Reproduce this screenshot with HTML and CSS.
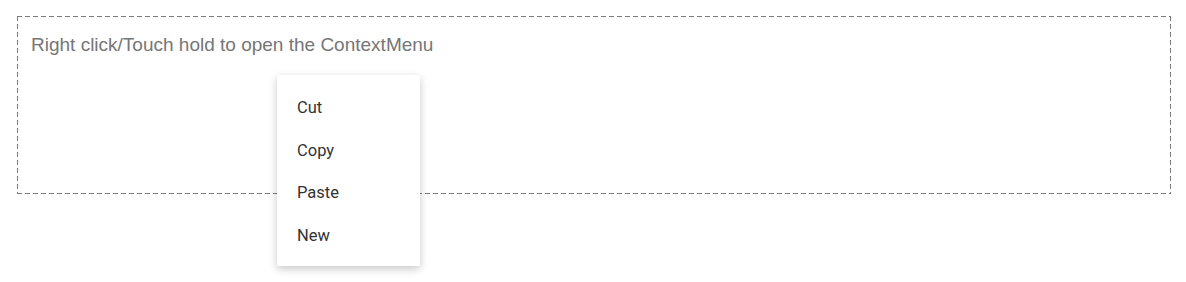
FILE: index.html
```html
<!DOCTYPE html>
<html lang="en">
<head>
    <meta charset="UTF-8">
    <meta name="viewport" content="width=device-width, initial-scale=1.0">
    <title>ContextMenu</title>
    <link rel="stylesheet" href="styles.css">
</head>
<body>
    <div class="target">Right click/Touch hold to open the ContextMenu</div>

    <ul class="context-menu">
        <li class="menu-item">Cut</li>
        <li class="menu-item">Copy</li>
        <li class="menu-item">Paste</li>
        <li class="menu-item">New</li>
    </ul>
</body>
</html>
```

FILE: styles.css
```css
body {
    margin: 0;
    padding: 16px 15px 0 17px;
    background-color: #fff;
}

/* dashed border drawn with gradients to get the longer dashes */
.target {
    height: 161px;
    padding: 17px 14px 0;
    background:
        repeating-linear-gradient(90deg, #7d7d7d 0 5px, transparent 5px 8px) top left / 100% 1px no-repeat,
        repeating-linear-gradient(90deg, #7d7d7d 0 5px, transparent 5px 8px) bottom left / 100% 1px no-repeat,
        repeating-linear-gradient(180deg, #7d7d7d 0 5px, transparent 5px 8px) top left / 1px 100% no-repeat,
        repeating-linear-gradient(180deg, #7d7d7d 0 5px, transparent 5px 8px) top right / 1px 100% no-repeat;
    font-family: "Liberation Sans", Arial, sans-serif;
    font-size: 19px;
    line-height: 24px;
    color: #767676;
}

.context-menu {
    position: absolute;
    top: 75px;
    left: 277px;
    width: 143px;
    margin: 0;
    padding: 12px 0 8px;
    list-style: none;
    background-color: #fff;
    box-shadow: 0 3px 8px 0 rgba(0, 0, 0, 0.22);
    border-radius: 2px;
    font-family: Roboto, "Noto Sans", sans-serif;
    font-size: 16.5px;
}

.menu-item {
    height: 42.7px;
    line-height: 42.7px;
    padding: 0 20px;
    color: #333;
}
```
